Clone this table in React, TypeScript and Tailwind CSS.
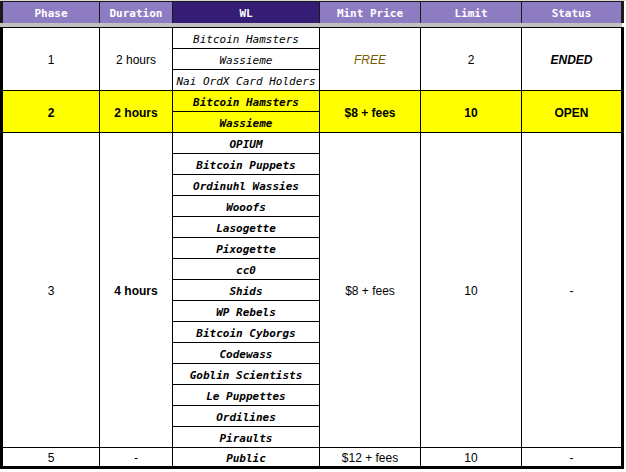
import React from "react";

const mono = "font-['DejaVu_Sans_Mono',monospace] text-[11px]";
const sans = "font-['Liberation_Sans',Arial,sans-serif] text-[12px]";

function Cell({
  children,
  className = "",
}: {
  children?: React.ReactNode;
  className?: string;
}) {
  return (
    <div
      className={`flex items-center justify-center whitespace-nowrap leading-none pt-[2px] text-black ${className}`}
    >
      {children}
    </div>
  );
}

const row1WL = ["Bitcoin Hamsters", "Wassieme", "Nai OrdX Card Holders"];
const row2WL = ["Bitcoin Hamsters", "Wassieme"];
const row3WL = [
  "OPIUM",
  "Bitcoin Puppets",
  "Ordinuhl Wassies",
  "Wooofs",
  "Lasogette",
  "Pixogette",
  "cc0",
  "Shids",
  "WP Rebels",
  "Bitcoin Cyborgs",
  "Codewass",
  "Goblin Scientists",
  "Le Puppettes",
  "Ordilines",
  "Piraults",
];

export default function App() {
  const headers: { label: string; dark?: boolean }[] = [
    { label: "Phase" },
    { label: "Duration" },
    { label: "WL", dark: true },
    { label: "Mint Price" },
    { label: "Limit" },
    { label: "Status" },
  ];
  return (
    <div className="w-[626px] h-[472px] bg-white overflow-hidden">
      <div className="h-px w-full bg-[#d9d9d9]" />
      {/* Header */}
      <div className="w-[624px] border-x-[3px] border-t border-[#1a1a1a] bg-[#1a1a1a] grid gap-px grid-cols-[96px_72px_146px_100px_100px_99px] grid-rows-[21px]">
        {headers.map((h) => (
          <div
            key={h.label}
            className={`flex items-center justify-center pt-[2px] text-white font-bold leading-none ${mono} ${
              h.dark ? "bg-[#351c75]" : "bg-[#8e7cc3]"
            }`}
          >
            {h.label}
          </div>
        ))}
      </div>
      <div className="w-[622px] h-[4px] bg-[#c0c0c0]" />
      {/* Body */}
      <div className="w-[624px] border-x-[3px] border-b-[3px] border-t border-black bg-black grid gap-px grid-cols-[96px_72px_146px_100px_100px_99px] grid-rows-[repeat(20,20px)_18px]">
        {/* Phase 1 */}
        <Cell className={`bg-white row-[1/4] col-[1] ${sans}`}>1</Cell>
        <Cell className={`bg-white row-[1/4] col-[2] ${sans}`}>2 hours</Cell>
        {row1WL.map((n) => (
          <Cell key={n} className={`bg-white col-[3] italic ${mono}`}>
            {n}
          </Cell>
        ))}
        <Cell className={`bg-white row-[1/4] col-[4] italic text-[#7a5c00]! ${sans}`}>
          FREE
        </Cell>
        <Cell className={`bg-white row-[1/4] col-[5] ${sans}`}>2</Cell>
        <Cell className={`bg-white row-[1/4] col-[6] italic font-bold ${sans}`}>
          ENDED
        </Cell>

        {/* Phase 2 */}
        <Cell className={`bg-[#ffff00] row-[4/6] col-[1] font-bold ${sans}`}>2</Cell>
        <Cell className={`bg-[#ffff00] row-[4/6] col-[2] font-bold ${sans}`}>
          2 hours
        </Cell>
        {row2WL.map((n) => (
          <Cell key={n} className={`bg-[#ffff00] col-[3] italic font-bold ${mono}`}>
            {n}
          </Cell>
        ))}
        <Cell className={`bg-[#ffff00] row-[4/6] col-[4] font-bold ${sans}`}>
          $8 + fees
        </Cell>
        <Cell className={`bg-[#ffff00] row-[4/6] col-[5] font-bold ${sans}`}>10</Cell>
        <Cell className={`bg-[#ffff00] row-[4/6] col-[6] font-bold ${sans}`}>
          OPEN
        </Cell>

        {/* Phase 3 */}
        <Cell className={`bg-white row-[6/21] col-[1] ${sans}`}>3</Cell>
        <Cell className={`bg-white row-[6/21] col-[2] font-bold ${sans}`}>4 hours</Cell>
        {row3WL.map((n) => (
          <Cell key={n} className={`bg-white col-[3] italic font-bold ${mono}`}>
            {n}
          </Cell>
        ))}
        <Cell className={`bg-white row-[6/21] col-[4] ${sans}`}>$8 + fees</Cell>
        <Cell className={`bg-white row-[6/21] col-[5] ${sans}`}>10</Cell>
        <Cell className={`bg-white row-[6/21] col-[6] ${sans}`}>-</Cell>

        {/* Phase 5 */}
        <Cell className={`bg-white row-[21] col-[1] ${sans}`}>5</Cell>
        <Cell className={`bg-white row-[21] col-[2] ${sans}`}>-</Cell>
        <Cell className={`bg-white row-[21] col-[3] italic font-bold ${mono}`}>
          Public
        </Cell>
        <Cell className={`bg-white row-[21] col-[4] ${sans}`}>$12 + fees</Cell>
        <Cell className={`bg-white row-[21] col-[5] ${sans}`}>10</Cell>
        <Cell className={`bg-white row-[21] col-[6] ${sans}`}>-</Cell>
      </div>
    </div>
  );
}
